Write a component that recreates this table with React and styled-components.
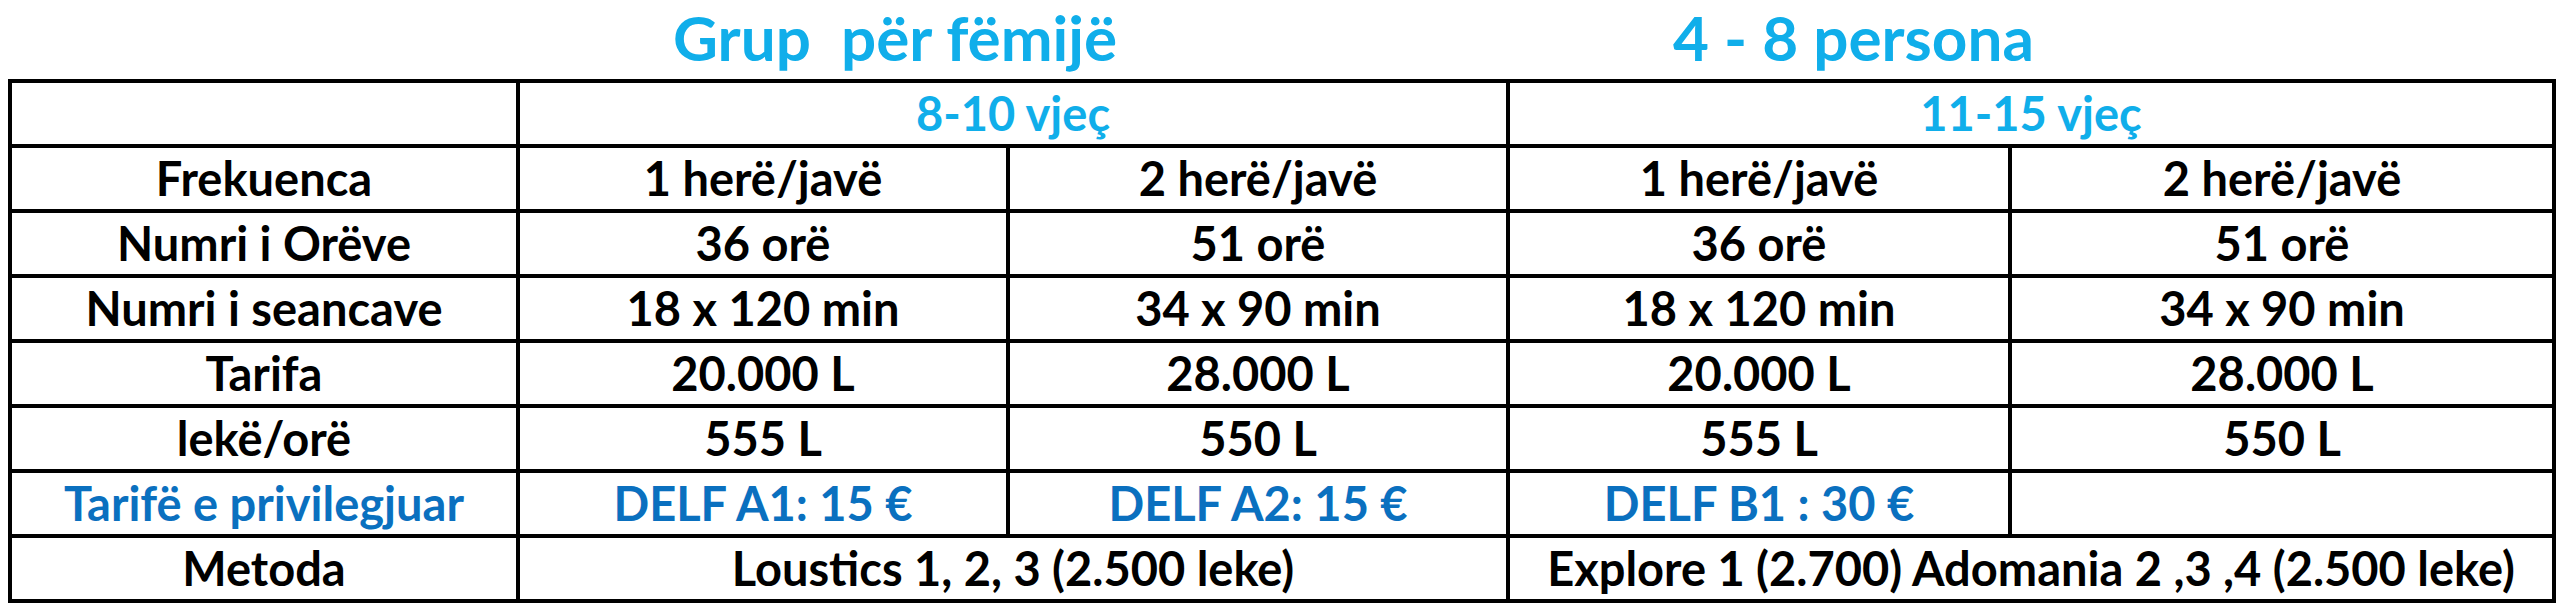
import styled, { createGlobalStyle } from "styled-components";

const GlobalStyle = createGlobalStyle`
  html, body {
    margin: 0;
    padding: 0;
    background: #ffffff;
  }
  body {
    font-family: Lato, "Open Sans", "Liberation Sans", sans-serif;
  }
`;

const LIGHT_BLUE = "#10aeea";
const DARK_BLUE = "#0a70bf";

const rows = [
  { label: "Frekuenca", cells: ["1 herë/javë", "2 herë/javë", "1 herë/javë", "2 herë/javë"] },
  { label: "Numri i Orëve", cells: ["36 orë", "51 orë", "36 orë", "51 orë"] },
  { label: "Numri i seancave", cells: ["18 x 120 min", "34 x 90 min", "18 x 120 min", "34 x 90 min"] },
  { label: "Tarifa", cells: ["20.000 L", "28.000 L", "20.000 L", "28.000 L"] },
  { label: "lekë/orë", cells: ["555 L", "550 L", "555 L", "550 L"] },
];

const privileged = ["DELF A1: 15 €", "DELF A2: 15 €", "DELF B1 : 30 €", ""];

const App = () => {
  return (
    <>
      <GlobalStyle />
      <Page>
        <TitleRow>
          <span />
          <Title>Grup&nbsp; për fëmijë</Title>
          <Title $offset="165px">4 - 8 persona</Title>
        </TitleRow>
        <Table>
          <colgroup>
            <col style={{ width: 508 }} />
            <col style={{ width: 490 }} />
            <col style={{ width: 500 }} />
            <col style={{ width: 502 }} />
            <col style={{ width: 544 }} />
          </colgroup>
          <tbody>
            <Tr>
              <Td />
              <Td colSpan={2} $color={LIGHT_BLUE}>
                8-10 vjeç
              </Td>
              <Td colSpan={2} $color={LIGHT_BLUE}>
                11-15 vjeç
              </Td>
            </Tr>
            {rows.map((r) => (
              <Tr key={r.label}>
                <Td>{r.label}</Td>
                {r.cells.map((c, i) => (
                  <Td key={i}>{c}</Td>
                ))}
              </Tr>
            ))}
            <Tr>
              <Td $color={DARK_BLUE}>Tarifë e privilegjuar</Td>
              {privileged.map((c, i) => (
                <Td key={i} $color={DARK_BLUE}>
                  {c}
                </Td>
              ))}
            </Tr>
            <Tr>
              <Td>Metoda</Td>
              <Td colSpan={2}>Loustics 1, 2, 3 (2.500 leke)</Td>
              <Td colSpan={2}>Explore 1 (2.700) Adomania 2 ,3 ,4 (2.500 leke)</Td>
            </Tr>
          </tbody>
        </Table>
      </Page>
    </>
  );
};
export default App;

const Page = styled.div`
  padding: 0 4px 8px 8px;
  width: 2548px;
`;

const TitleRow = styled.div`
  display: grid;
  grid-template-columns: 510px 990px 1048px;
  height: 79px;
  padding-bottom: 6px;
  box-sizing: border-box;
  align-items: center;
`;

const Title = styled.div`
  color: ${LIGHT_BLUE};
  font-size: 62px;
  font-weight: 700;
  padding-left: ${(p) => p.$offset || "155px"};
  white-space: nowrap;
  line-height: 1;
`;

const Table = styled.table`
  border-collapse: collapse;
  table-layout: fixed;
  width: 2548px;
`;

const Tr = styled.tr`
  height: 65px;
`;

const Td = styled.td`
  border: 4px solid #000;
  padding: 0;
  text-align: center;
  vertical-align: middle;
  font-size: 47px;
  font-weight: 700;
  color: ${(p) => p.$color || "#000"};
  white-space: nowrap;
  line-height: 1;
`;
